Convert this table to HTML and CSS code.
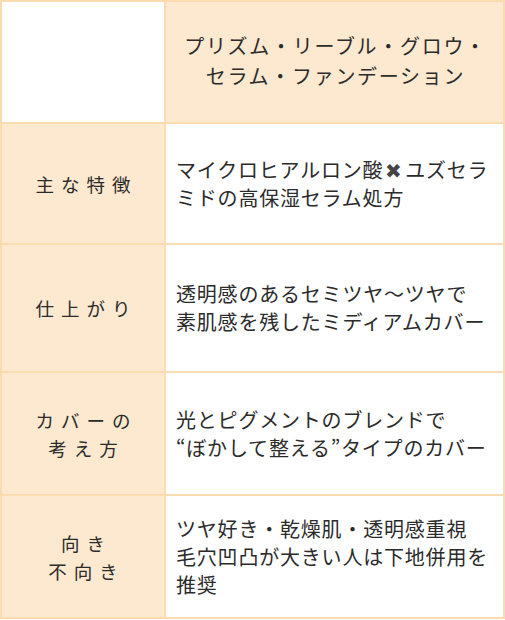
FILE: index.html
```html
<!DOCTYPE html>
<html lang="ja">
<head>
<meta charset="utf-8">
<link rel="stylesheet" href="styles.css">
</head>
<body>
<div class="spec">
  <div class="cell corner"></div>
  <div class="cell title"><div class="txt">プリズム・リーブル・グロウ・<br>セラム・ファンデーション</div></div>

  <div class="cell label"><div class="txt">主な特徴</div></div>
  <div class="cell value"><div class="txt">マイクロヒアルロン酸<span class="cross">✖</span>ユズセラ<br>ミドの高保湿セラム処方</div></div>

  <div class="cell label"><div class="txt">仕上がり</div></div>
  <div class="cell value"><div class="txt">透明感のあるセミツヤ〜ツヤで<br>素肌感を残したミディアムカバー</div></div>

  <div class="cell label"><div class="txt">カバーの<br>考え方</div></div>
  <div class="cell value"><div class="txt">光とピグメントのブレンドで<br>“ぼかして整える”タイプのカバー</div></div>

  <div class="cell label"><div class="txt">向き<br>不向き</div></div>
  <div class="cell value"><div class="txt">ツヤ好き・乾燥肌・透明感重視<br>毛穴凹凸が大きい人は下地併用を<br>推奨</div></div>
</div>
</body>
</html>
```

FILE: styles.css
```css
html, body {
  margin: 0;
  padding: 0;
  background: #ffffff;
}

.spec {
  display: grid;
  grid-template-columns: 164px 339px;
  grid-template-rows: 122px 121px 128px 123px 123px;
  width: 503px;
  border-top: 2px solid #fbdcb0;
  border-left: 2px solid #fbdcb0;
  font-family: "Noto Sans CJK JP", "Noto Sans", sans-serif;
  color: #2b2b2b;
}

.cell {
  border-right: 2px solid #fbdcb0;
  border-bottom: 2px solid #fbdcb0;
  display: flex;
  align-items: center;
}

.corner {
  background: #ffffff;
}

.title {
  background: #fde8d0;
  justify-content: center;
  text-align: center;
  font-size: 20px;
  letter-spacing: 1.7px;
  line-height: 30px;
  padding-left: 2px;
  padding-bottom: 2px;
}

.label {
  background: #fde8d0;
  justify-content: center;
  text-align: center;
  font-size: 18.5px;
  letter-spacing: 7px;
  line-height: 28px;
  padding-left: 7px;
}

.value {
  background: #ffffff;
  text-align: left;
  font-size: 20px;
  letter-spacing: 0.8px;
  line-height: 28px;
  padding: 0 0 0 10px;
}

.txt {
  min-width: 0;
}

.cross {
  color: #444;
  margin: 0 2px;
}
```
